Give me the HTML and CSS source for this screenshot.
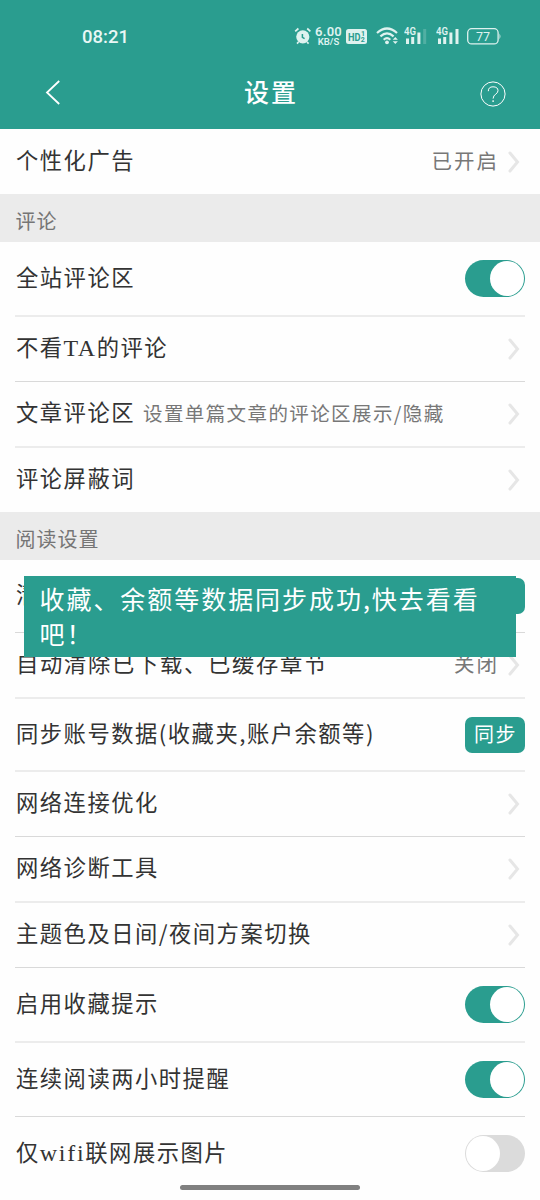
FILE: index.html
```html
<!DOCTYPE html>
<html lang="zh-CN">
<head>
<meta charset="utf-8">
<title>设置</title>
<link rel="stylesheet" href="styles.css">
</head>
<body>
<svg width="0" height="0" class="defs"><defs>
<symbol id="chev" viewBox="0 0 14 24"><path d="M3 3 L10.5 12 L3 21" fill="none" stroke="#e6e6e6" stroke-width="3" stroke-linecap="round"/></symbol>
</defs></svg>
<div class="screen">
<header class="header">
  <div class="status">
    <span class="time">08:21</span>
    <div class="tray">
      <svg class="alarm" width="18" height="18" viewBox="0 0 18 18"><circle cx="8.8" cy="9.8" r="6.6" fill="#dff2ef"/><path d="M1.2 4.4 L4.4 1.5 M13.2 1.5 L16.4 4.4 M4.5 15 L3 16.6 M13 15 L14.6 16.6" stroke="#dff2ef" stroke-width="1.7" fill="none"/><path d="M8.4 7 V10.4 L10.6 11.6" stroke="#2a9d8f" stroke-width="1.5" fill="none"/></svg>
      <span class="speed"><b>6.00</b><b class="unit">KB/S</b></span>
      <svg class="hd" width="21" height="15" viewBox="0 0 21 15"><rect width="21" height="15" rx="2.5" fill="#dff2ef"/><g fill="#2a9d8f" class="hd-text"><text x="2" y="11.7" font-size="11.5" textLength="12.5" lengthAdjust="spacingAndGlyphs">HD</text><text x="15" y="6.8" font-size="7">1</text><text x="14.8" y="13.4" font-size="7">2</text></g></svg>
      <svg class="wifi" width="24" height="18" viewBox="0 0 24 18"><g fill="none" stroke="#dff2ef" stroke-width="2.2"><path d="M1 6 Q11 -3 21 6"/><path d="M4.4 9.4 Q11 3.4 17.6 9.4"/><path d="M7.7 12.7 Q11 9.7 14.3 12.7"/></g><circle cx="11" cy="15.3" r="1.9" fill="#dff2ef"/><path d="M16.7 12.7 L19.3 10 L21.9 12.7 Z M16.7 14.2 L19.3 17 L21.9 14.2 Z" fill="#dff2ef"/></svg>
      <svg class="signal" width="24" height="20" viewBox="0 -2 24 20"><text x="0" y="8.4" font-size="10.5" textLength="12" lengthAdjust="spacingAndGlyphs" class="net">4G</text><g fill="#dff2ef"><path d="M2 11.5h3v5.5h-3zM7.2 10h3v7h-3zM13.4 5.5h3v11.5h-3z"/><path opacity=".22" d="M19.2 2h3v15h-3z"/></g></svg>
      <svg class="signal second" width="24" height="20" viewBox="0 -2 24 20"><text x="0" y="8.4" font-size="10.5" textLength="12" lengthAdjust="spacingAndGlyphs" class="net">4G</text><path fill="#dff2ef" d="M2 11.5h3v5.5h-3zM7.2 10h3v7h-3zM13.4 5.5h3v11.5h-3zM19.5 2h3v15h-3z"/></svg>
      <svg class="battery" width="35" height="17" viewBox="0 0 35 17"><rect x=".7" y=".7" width="30.4" height="15.2" rx="4" fill="none" stroke="#dff2ef" stroke-width="1.3"/><path d="M32.5 5.5 Q34.4 8.3 32.5 11.3Z" fill="#dff2ef"/><text x="9" y="12.9" font-size="12.5" class="charge">77</text></svg>
    </div>
  </div>
  <div class="nav">
    <svg class="back" width="18" height="26" viewBox="0 0 18 26"><path d="M14.2 1 L2 12.5 L14.2 24" fill="none" stroke="#fff" stroke-width="1.8"/></svg>
    <h1 class="title">设置</h1>
    <svg class="help" width="26" height="26" viewBox="0 0 26 26"><g fill="none" stroke="#fff" stroke-width="1"><circle cx="13" cy="13" r="12.1"/><path d="M8.3 10.2 Q8.3 5.8 13 5.8 Q18 5.8 18 9.8 C18 13 13.1 13.2 13.1 17.6"/></g><circle cx="13.1" cy="20.1" r=".9" fill="#fff"/></svg>
  </div>
</header>
<main>
  <div class="row first"><span class="label">个性化广告</span><span class="value">已开启</span><svg class="chev"><use href="#chev"/></svg></div>
  <h2 class="section">评论</h2>
  <div class="row tall soft"><span class="label">全站评论区</span><span class="switch on"></span></div>
  <div class="row"><span class="label">不看<span class="latin">TA</span>的评论</span><svg class="chev"><use href="#chev"/></svg></div>
  <div class="row soft"><span class="label">文章评论区</span><span class="hint">设置单篇文章的评论区展示/隐藏</span><svg class="chev"><use href="#chev"/></svg></div>
  <div class="row last"><span class="label">评论屏蔽词</span><svg class="chev"><use href="#chev"/></svg></div>
  <h2 class="section">阅读设置</h2>
  <div class="row action"><span class="label">清除缓存</span><span class="button"></span></div>
  <div class="row soft"><span class="label wide">自动清除已下载、已缓存章节</span><span class="value">关闭</span><svg class="chev"><use href="#chev"/></svg></div>
  <div class="row action soft"><span class="label">同步账号数据(收藏夹,账户余额等)</span><span class="button">同步</span></div>
  <div class="row"><span class="label">网络连接优化</span><svg class="chev"><use href="#chev"/></svg></div>
  <div class="row soft"><span class="label">网络诊断工具</span><svg class="chev"><use href="#chev"/></svg></div>
  <div class="row"><span class="label">主题色及日间/夜间方案切换</span><svg class="chev"><use href="#chev"/></svg></div>
  <div class="row tall soft"><span class="label">启用收藏提示</span><span class="switch on"></span></div>
  <div class="row toggle"><span class="label">连续阅读两小时提醒</span><span class="switch on"></span></div>
  <div class="row toggle last"><span class="label">仅<span class="latin wifi-word">wifi</span>联网展示图片</span><span class="switch"></span></div>
</main>
<div class="toast">收藏、余额等数据同步成功,快去看看吧！</div>
<div class="home"></div>
</div>
</body>
</html>
```
FILE: styles.css
```css
* { box-sizing: border-box; }
body { margin: 0; background: #fff; font-family: "Noto Sans CJK SC", sans-serif; color: #333; }
.defs { position: absolute; }
.screen { position: relative; width: 540px; height: 1200px; overflow: hidden; background: #fefefe; }

.header { height: 129px; background: #2a9d8f; color: #fff; }
.status { height: 56px; padding: 16px 0 0 82px; display: flex; align-items: flex-start; }
.time { width: 212px; height: 40px; margin-top: 1px; font: 500 18.5px/40px Roboto, sans-serif; color: #e9f7f5; }
.tray { display: flex; align-items: flex-start; padding-top: 11px; }
.speed { width: 27px; margin-left: 3px; display: flex; flex-direction: column; align-items: center; color: #dff2ef; font: 13px/10px Roboto, sans-serif; }
.speed b { font-weight: 600; letter-spacing: .2px; }
.speed .unit { font-size: 9.5px; line-height: 9px; letter-spacing: 0; }
.hd { margin: 2px 0 0 4px; }
.hd-text { font-family: Roboto, sans-serif; font-weight: 700; }
.wifi { margin-left: 9px; }
.signal { margin: -2px 0 0 4px; }
.second { margin-left: 8px; }
.net { font-family: Roboto, sans-serif; font-weight: 600; fill: #dff2ef; }
.battery { margin: 1px 0 0 7px; }
.charge { font-family: Roboto, sans-serif; fill: #dff2ef; }

.nav { height: 73px; padding: 0 34px 0 45px; display: grid; grid-template-columns: 60px 1fr 71px; align-items: center; }
.title { margin: -3px 0 0 2px; text-align: center; font-size: 25px; font-weight: 500; line-height: 36px; letter-spacing: 2px; }
.help { justify-self: end; margin-top: 2px; }

.section { margin: 0; height: 48px; padding: 3px 16px 0 15.5px; background: #ebebeb; color: #757575; font-size: 20px; font-weight: 400; line-height: 48px; letter-spacing: 1px; }
.row { height: 65px; margin: 0 15px; display: flex; align-items: center; border-bottom: 1px solid #d9d9d9; white-space: nowrap; }
.soft { height: 66px; border-bottom: 2px solid #ececec; }
.tall { height: 75px; }
.toggle { height: 74px; }
.action { height: 73px; }
.last { height: 64px; border: 0; }
.first { border: 0; }
.toggle.last { height: 73px; }
.label { flex: none; margin-left: 1px; padding-bottom: 6px; font-size: 22.3px; line-height: 32px; letter-spacing: 1.5px; }
.wide { letter-spacing: 1.7px; }
.first .label, .tall .label { padding-bottom: 5px; }
.latin { font-family: "Liberation Serif", serif; font-size: 24px; line-height: 1; }
.wifi-word { letter-spacing: 1.7px; }
.hint { margin-left: 8px; padding-bottom: 4px; font-size: 19.5px; letter-spacing: 1.4px; color: #777; }
.value { margin-left: auto; margin-right: 8px; padding-bottom: 4px; font-size: 20.5px; letter-spacing: 2px; color: #777; }
.chev { width: 14px; height: 24px; flex: none; margin: 0 4px 0 auto; }
.value + .chev { margin-left: 0; }
.switch { width: 60px; height: 37px; margin-left: auto; padding: 1px; display: flex; border-radius: 19px; background: #dbdbdb; }
.switch::before { content: ""; width: 34px; height: 35px; border-radius: 50%; background: #fff; }
.on { justify-content: flex-end; background: #2a9d8f; }
.button { width: 60px; height: 36px; margin-left: auto; padding-left: 1px; border-radius: 7px; background: #2a9d8f; color: #fff; font-size: 20px; line-height: 34px; letter-spacing: 1.5px; text-align: center; }

.toast { position: absolute; left: 24px; top: 576px; width: 492px; height: 81px; padding: 5px 32px 0 15.5px; background: #2a9d8f; color: #fff; font-size: 25px; line-height: 35px; letter-spacing: 1.95px; }
.home { position: absolute; left: 180px; top: 1185px; width: 180px; height: 5px; border-radius: 3px; background: #808080; }
```
